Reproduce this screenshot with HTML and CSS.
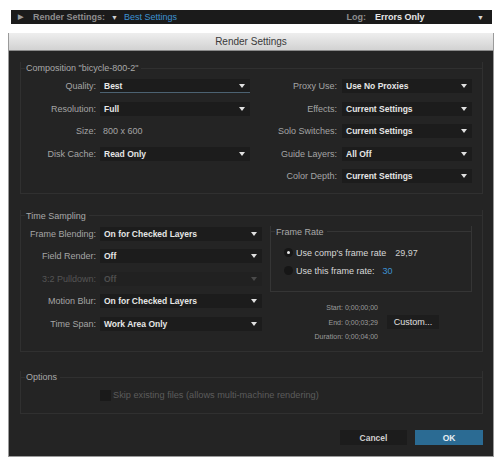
FILE: index.html
```html
<!DOCTYPE html>
<html>
<head>
<meta charset="utf-8">
<link rel="stylesheet" href="styles.css">
</head>
<body>
<div class="topbar">
  <span class="tri-r">&#9654;</span>
  <span class="tb-label">Render Settings:</span>
  <span class="tri-d">&#9660;</span>
  <span class="tb-link">Best Settings</span>
  <span class="tb-spacer"></span>
  <span class="tb-label">Log:</span>
  <span class="tb-value">Errors Only</span>
  <span class="tri-d end">&#9660;</span>
</div>

<div class="dialog">
  <div class="titlebar">Render Settings</div>
  <div class="body">

    <div class="group comp">
      <div class="ghead"><span class="gtitle">Composition "bicycle-800-2"</span></div>
      <div class="gcontent">
        <div class="form left">
          <span class="lbl">Quality:</span><div class="dd focus"><span>Best</span><i class="arr"></i></div>
          <span class="lbl">Resolution:</span><div class="dd"><span>Full</span><i class="arr"></i></div>
          <span class="lbl">Size:</span><div class="plain">800 x 600</div>
          <span class="lbl">Disk Cache:</span><div class="dd"><span>Read Only</span><i class="arr"></i></div>
        </div>
        <div class="form right">
          <span class="lbl">Proxy Use:</span><div class="dd"><span>Use No Proxies</span><i class="arr"></i></div>
          <span class="lbl">Effects:</span><div class="dd"><span>Current Settings</span><i class="arr"></i></div>
          <span class="lbl">Solo Switches:</span><div class="dd"><span>Current Settings</span><i class="arr"></i></div>
          <span class="lbl">Guide Layers:</span><div class="dd"><span>All Off</span><i class="arr"></i></div>
          <span class="lbl">Color Depth:</span><div class="dd"><span>Current Settings</span><i class="arr"></i></div>
        </div>
      </div>
    </div>

    <div class="group time">
      <div class="ghead"><span class="gtitle">Time Sampling</span></div>
      <div class="gcontent">
        <div class="form left wide">
          <span class="lbl">Frame Blending:</span><div class="dd"><span>On for Checked Layers</span><i class="arr"></i></div>
          <span class="lbl">Field Render:</span><div class="dd"><span>Off</span><i class="arr"></i></div>
          <span class="lbl dis">3:2 Pulldown:</span><div class="dd dis"><span>Off</span><i class="arr"></i></div>
          <span class="lbl">Motion Blur:</span><div class="dd"><span>On for Checked Layers</span><i class="arr"></i></div>
          <span class="lbl">Time Span:</span><div class="dd"><span>Work Area Only</span><i class="arr"></i></div>
        </div>
        <div class="rightcol">
          <div class="group fr">
            <div class="ghead"><span class="gtitle">Frame Rate</span></div>
            <div class="frcontent">
              <div class="radio-row"><span class="radio on"></span><span class="rtext">Use comp's frame rate</span><span class="rval">29,97</span></div>
              <div class="radio-row"><span class="radio"></span><span class="rtext">Use this frame rate:</span><span class="rval blue">30</span></div>
            </div>
          </div>
          <div class="span-grid">
            <span class="sp">Start: 0;00;00;00</span><span></span>
            <span class="sp">End: 0;00;03;29</span><button class="custom">Custom...</button>
            <span class="sp">Duration: 0;00;04;00</span><span></span>
          </div>
        </div>
      </div>
    </div>

    <div class="group opts">
      <div class="ghead"><span class="gtitle">Options</span></div>
      <div class="optrow"><span class="check"></span><span class="optlbl">Skip existing files (allows multi-machine rendering)</span></div>
    </div>

    <div class="buttons">
      <button class="btn cancel">Cancel</button>
      <button class="btn ok">OK</button>
    </div>
  </div>
</div>
</body>
</html>
```
FILE: styles.css
```css
* { box-sizing: border-box; }
html, body { margin: 0; padding: 0; background: #ffffff; }
body { font-family: "Liberation Sans", Arial, sans-serif; width: 500px; height: 470px; overflow: hidden; }

.topbar {
  margin: 10px 0 0 11px;
  width: 481px;
  height: 14px;
  background: #1b1b1b;
  display: flex;
  align-items: center;
  font-size: 9px;
  font-weight: bold;
  padding: 0 8px 0 7px;
}
.tri-r { color: #9a9a9a; font-size: 7px; margin-right: 10px; }
.tri-d { color: #cfcfcf; font-size: 7px; margin: 0 6px 0 6px; }
.tri-d.end { margin: 0; color: #d8d8d8; }
.tb-label { color: #8e8e8e; }
.tb-link { color: #3d92d3; font-weight: normal; }
.tb-spacer { flex: 1; }
.tb-value { color: #e8e8e8; margin-left: 9px; width: 102px; }

.dialog {
  margin: 9px 0 0 8px;
  width: 486px;
  height: 424px;
  background: #242424;
  border: 1px solid #9a9a9a;
  border-top: none;
  display: flex;
  flex-direction: column;
}
.titlebar {
  height: 18px;
  background: linear-gradient(#eeeeee, #d2d2d2);
  border-bottom: 1px solid #8a8a8a;
  color: #3a3a3a;
  font-size: 10px;
  line-height: 18px;
  text-align: center;
}
.body {
  flex: 1;
  padding: 11px 10px 0 11px;
  display: flex;
  flex-direction: column;
}

.group {
  border: 1px solid #303030;
  border-top: none;
}
.ghead {
  height: 12px;
  display: flex;
  align-items: center;
  margin: 0 -1px;
}
.ghead::before {
  content: "";
  width: 5px;
  border-top: 1px solid #303030;
}
.ghead::after {
  content: "";
  flex: 1;
  border-top: 1px solid #303030;
}
.gtitle {
  color: #a9a9a9;
  font-size: 9px;
  padding: 0 3px 0 1px;
}

.gcontent { display: flex; padding-top: 1px; }
.comp { padding-bottom: 5px; }
.time { margin-top: 16px; padding-bottom: 7px; }

.form {
  display: grid;
  grid-auto-rows: 22.5px;
  align-items: center;
  column-gap: 4px;
}
.form.left { grid-template-columns: 75px 150px; }
.form.left.wide { grid-template-columns: 75px 162px; }
.form.right { grid-template-columns: 84px 130px; column-gap: 5px; margin-left: auto; margin-right: 10px; }

.lbl { color: #a4a4a4; font-size: 9px; text-align: right; white-space: nowrap; }
.lbl.dis { color: #555555; }
.dd {
  height: 14px;
  background: #1c1c1c;
  display: flex;
  align-items: center;
  padding: 0 5px 0 4px;
  color: #e6e6e6;
  font-size: 8.5px;
  font-weight: bold;
}
.dd span { flex: 1; white-space: nowrap; }
.dd.focus { border-bottom: 1px solid #4c6272; }
.dd.dis { background: #212121; color: #4e4e4e; }
.arr {
  width: 0; height: 0;
  border-left: 3.5px solid transparent;
  border-right: 3.5px solid transparent;
  border-top: 4px solid #e0e0e0;
}
.dd.dis .arr { border-top-color: #4a4a4a; }
.plain { color: #a4a4a4; font-size: 9px; padding-left: 3px; }

.rightcol { margin-left: 8px; margin-top: 3px; width: 202px; display: flex; flex-direction: column; }
.fr { border-color: #353535; }
.fr .ghead::before, .fr .ghead::after { border-top-color: #353535; }
.frcontent { padding: 6px 0 11px 13px; }
.radio-row { height: 18px; display: flex; align-items: center; }
.radio {
  width: 9px; height: 9px; border-radius: 50%;
  background: #161616;
  display: flex; align-items: center; justify-content: center;
  margin-right: 3px;
}
.radio.on::after {
  content: ""; width: 3px; height: 3px; border-radius: 50%; background: #e8e8e8;
}
.rtext { color: #d8d8d8; font-size: 9px; }
.rval { color: #d0d0d0; font-size: 9px; margin-left: 9px; }
.rval.blue { color: #3d92d3; margin-left: 8px; }

.span-grid {
  margin-top: 9px;
  display: grid;
  grid-template-columns: 108px 52px;
  grid-auto-rows: 14.5px;
  column-gap: 9px;
  align-items: center;
}
.sp { color: #9c9c9c; font-size: 7px; text-align: right; white-space: nowrap; }
.custom {
  height: 14px;
  border: none;
  background: #1d1d1d;
  color: #e0e0e0;
  font-family: "Liberation Sans", Arial, sans-serif;
  font-size: 9px;
  padding: 0;
}

.opts { margin-top: 19px; padding: 5px 0 11px 0; }
.opts .ghead { margin-top: -5px; margin-bottom: 5px; }
.optrow { height: 14px; display: flex; align-items: center; padding-left: 79px; }
.check { width: 11px; height: 11px; background: #1a1a1a; margin-right: 2px; }
.optlbl { color: #5c5c5c; font-size: 9.2px; }

.buttons { margin-top: 16px; display: flex; justify-content: flex-end; gap: 8px; padding-right: 0; }
.btn {
  height: 15px;
  width: 67px;
  border: none;
  font-family: "Liberation Sans", Arial, sans-serif;
  font-size: 8.5px;
  font-weight: bold;
  padding: 0;
}
.cancel { background: #1c1c1c; color: #cfcfcf; }
.ok { background: #2b6b93; color: #e8eef2; width: 68px; }
```
